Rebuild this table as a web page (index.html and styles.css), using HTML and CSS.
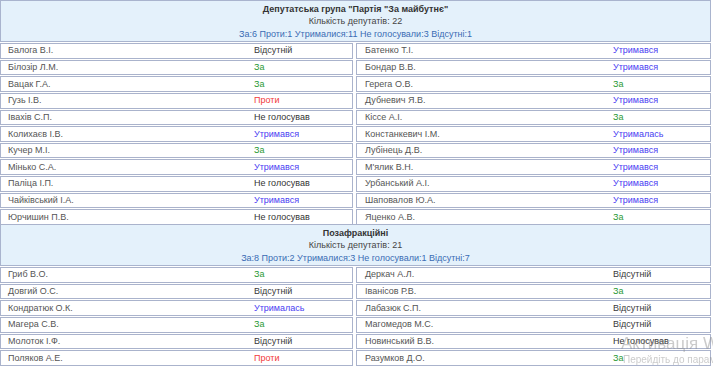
FILE: index.html
```html
<!DOCTYPE html>
<html lang="uk">
<head>
<meta charset="utf-8">
<link rel="stylesheet" href="styles.css">
</head>
<body>
<div class="page">
  <section class="group">
    <div class="group-head">
      <div class="g-title">Депутатська група "Партія "За майбутнє"</div>
      <div class="g-count">Кількість депутатів: 22</div>
      <div class="g-sum">За:6 Проти:1 Утрималися:11 Не голосували:3 Відсутні:1</div>
    </div>
    <div class="rows">
      <div class="cell"><span class="nm">Балога В.І.</span><span class="v abs">Відсутній</span></div>
      <div class="cell"><span class="nm">Батенко Т.І.</span><span class="v abst">Утримався</span></div>
      <div class="cell"><span class="nm">Білозір Л.М.</span><span class="v yes">За</span></div>
      <div class="cell"><span class="nm">Бондар В.В.</span><span class="v abst">Утримався</span></div>
      <div class="cell"><span class="nm">Вацак Г.А.</span><span class="v yes">За</span></div>
      <div class="cell"><span class="nm">Герега О.В.</span><span class="v yes">За</span></div>
      <div class="cell"><span class="nm">Гузь І.В.</span><span class="v no">Проти</span></div>
      <div class="cell"><span class="nm">Дубневич Я.В.</span><span class="v abst">Утримався</span></div>
      <div class="cell"><span class="nm">Івахів С.П.</span><span class="v nv">Не голосував</span></div>
      <div class="cell"><span class="nm">Кіссе А.І.</span><span class="v yes">За</span></div>
      <div class="cell"><span class="nm">Колихаєв І.В.</span><span class="v abst">Утримався</span></div>
      <div class="cell"><span class="nm">Констанкевич І.М.</span><span class="v abst">Утрималась</span></div>
      <div class="cell"><span class="nm">Кучер М.І.</span><span class="v yes">За</span></div>
      <div class="cell"><span class="nm">Лубінець Д.В.</span><span class="v abst">Утримався</span></div>
      <div class="cell"><span class="nm">Мінько С.А.</span><span class="v abst">Утримався</span></div>
      <div class="cell"><span class="nm">М'ялик В.Н.</span><span class="v abst">Утримався</span></div>
      <div class="cell"><span class="nm">Паліца І.П.</span><span class="v nv">Не голосував</span></div>
      <div class="cell"><span class="nm">Урбанський А.І.</span><span class="v abst">Утримався</span></div>
      <div class="cell"><span class="nm">Чайківський І.А.</span><span class="v abst">Утримався</span></div>
      <div class="cell"><span class="nm">Шаповалов Ю.А.</span><span class="v abst">Утримався</span></div>
      <div class="cell"><span class="nm">Юрчишин П.В.</span><span class="v nv">Не голосував</span></div>
      <div class="cell"><span class="nm">Яценко А.В.</span><span class="v yes">За</span></div>
    </div>
  </section>
  <section class="group">
    <div class="group-head">
      <div class="g-title">Позафракційні</div>
      <div class="g-count">Кількість депутатів: 21</div>
      <div class="g-sum">За:8 Проти:2 Утрималися:3 Не голосували:1 Відсутні:7</div>
    </div>
    <div class="rows">
      <div class="cell"><span class="nm">Гриб В.О.</span><span class="v yes">За</span></div>
      <div class="cell"><span class="nm">Деркач А.Л.</span><span class="v abs">Відсутній</span></div>
      <div class="cell"><span class="nm">Довгий О.С.</span><span class="v abs">Відсутній</span></div>
      <div class="cell"><span class="nm">Іванісов Р.В.</span><span class="v yes">За</span></div>
      <div class="cell"><span class="nm">Кондратюк О.К.</span><span class="v abst">Утрималась</span></div>
      <div class="cell"><span class="nm">Лабазюк С.П.</span><span class="v abs">Відсутній</span></div>
      <div class="cell"><span class="nm">Магера С.В.</span><span class="v yes">За</span></div>
      <div class="cell"><span class="nm">Магомедов М.С.</span><span class="v abs">Відсутній</span></div>
      <div class="cell"><span class="nm">Молоток І.Ф.</span><span class="v abs">Відсутній</span></div>
      <div class="cell"><span class="nm">Новинський В.В.</span><span class="v nv">Не голосував</span></div>
      <div class="cell"><span class="nm">Поляков А.Е.</span><span class="v no">Проти</span></div>
      <div class="cell"><span class="nm">Разумков Д.О.</span><span class="v yes">За</span></div>
    </div>
  </section>
</div>
<div class="watermark">
  <div class="wm-big">Активація Windows</div>
  <div class="wm-small">Перейдіть до параметрів</div>
</div>
</body>
</html>
```

FILE: styles.css
```css
html, body {
  margin: 0;
  padding: 0;
  background: #ffffff;
}
body {
  font-family: "Liberation Sans", Arial, sans-serif;
  font-size: 9px;
  color: #555;
  overflow: hidden;
}
.page {
  width: 711px;
}
.group-head {
  background: #e4f1fb;
  border: 1px solid #a9b4ce;
  text-align: center;
  padding-top: 2px;
  height: 38px;
  box-sizing: content-box;
}
.group + .group .group-head {
  margin-top: -1px;
}
.g-title {
  font-weight: bold;
  color: #333;
  line-height: 12px;
}
.g-count {
  color: #444;
  line-height: 12px;
}
.g-sum {
  color: #3a6cb4;
  line-height: 14px;
}
.rows {
  display: grid;
  grid-template-columns: 353px 355px;
  column-gap: 3px;
  row-gap: 1px;
  padding-top: 1px;
  background: #fff;
}
.cell {
  height: 15.65px;
  box-sizing: border-box;
  border: 1px solid #aab3cc;
  background: #fff;
  display: grid;
  grid-template-columns: 246px 1fr;
  align-items: center;
  padding-left: 7px;
  line-height: 13px;
}
.rows .cell:nth-child(2n) {
  grid-template-columns: 248px 1fr;
  padding-left: 8px;
}
.nm {
  color: #555;
  white-space: nowrap;
}
.v {
  white-space: nowrap;
}
.abs { color: #3a3a3a; }
.nv { color: #333; }
.yes { color: #2c9a35; }
.no { color: #f23a3a; }
.abst { color: #4a3df2; }
.watermark {
  position: fixed;
  left: 621px;
  top: 334px;
  color: rgba(140, 140, 140, 0.45);
  white-space: nowrap;
  pointer-events: none;
}
.wm-big {
  font-size: 17px;
  line-height: 20px;
}
.wm-small {
  font-size: 10px;
  line-height: 12px;
  padding-left: 2px;
}
```
